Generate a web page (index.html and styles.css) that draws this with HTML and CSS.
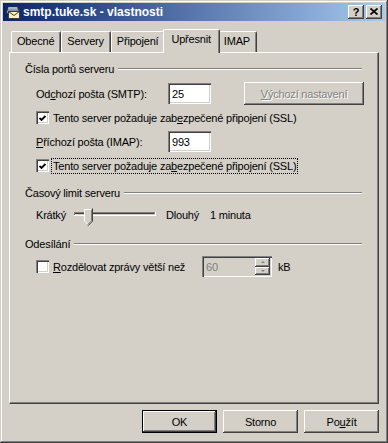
FILE: index.html
```html
<!DOCTYPE html>
<html lang="cs">
<head>
    <meta charset="UTF-8">
    <title>smtp.tuke.sk - vlastnosti</title>
    <link rel="stylesheet" href="styles.css">
</head>
<body>
    <div class="window">
        <div class="titlebar">
            <svg class="app-icon" width="16" height="16" viewBox="0 0 16 16">
                <path d="M1.5 7.5 L3.5 2.5 H12.5 L14.5 7.5 V9.5 H1.5 Z" fill="#8796ad" stroke="#1f2b4a"/>
                <path d="M3 4 H12" stroke="#c9d2e0"/>
                <rect x="3.5" y="7.5" width="11" height="7" fill="#fbf1bd" stroke="#3b3b3b"/>
                <path d="M3.5 7.5 L9 11.5 L14.5 7.5" fill="none" stroke="#3b3b3b"/>
            </svg>
            <span class="title">smtp.tuke.sk - vlastnosti</span>
            <div class="caption-buttons">
                <div class="cap-btn help">?</div>
                <div class="cap-btn close">
                    <svg width="8" height="7" viewBox="0 0 8 7">
                        <path d="M0.5 0.5 L7.5 6.5 M7.5 0.5 L0.5 6.5" stroke="#000" stroke-width="1.7"/>
                    </svg>
                </div>
            </div>
        </div>

        <div class="dialog">
            <div class="tabs">
                <div class="tab">Obecné</div>
                <div class="tab">Servery</div>
                <div class="tab">Připojení</div>
                <div class="tab active">Upřesnit</div>
                <div class="tab">IMAP</div>
            </div>

            <div class="tab-panel">
                <div class="group-title"><span>Čísla portů serveru</span><i class="etch"></i></div>

                <div class="row row-smtp">
                    <label class="field-label">Od<u>c</u>hozí pošta (SMTP):</label>
                    <input class="textbox" type="text" value="25">
                    <button class="btn btn-defaults" disabled><u>V</u>ýchozí nastavení</button>
                </div>

                <div class="row row-check row-ssl1">
                    <span class="checkbox">
                        <svg width="7" height="7" viewBox="0 0 7 7"><path d="M0.5 3 L2.5 5 L6.5 1" fill="none" stroke="#000" stroke-width="1.8"/></svg>
                    </span>
                    <span>Tento server požaduje zab<u>e</u>zpečené připojení (SSL)</span>
                </div>

                <div class="row row-imap">
                    <label class="field-label"><u>P</u>říchozí pošta (IMAP):</label>
                    <input class="textbox" type="text" value="993">
                </div>

                <div class="row row-check row-ssl2">
                    <span class="checkbox">
                        <svg width="7" height="7" viewBox="0 0 7 7"><path d="M0.5 3 L2.5 5 L6.5 1" fill="none" stroke="#000" stroke-width="1.8"/></svg>
                    </span>
                    <span class="focused">Tento server požaduje za<u>b</u>ezpečené připojení (SSL)</span>
                </div>

                <div class="group-title group-timeout"><span>Časový limit serveru</span><i class="etch"></i></div>

                <div class="row row-slider">
                    <span>Krátký</span>
                    <svg class="slider" width="82" height="18" viewBox="0 0 82 18">
                        <rect x="0" y="4" width="82" height="4" fill="#fff"/>
                        <rect x="0" y="4" width="81" height="3" fill="#808080"/>
                        <rect x="1" y="5" width="79" height="1" fill="#404040"/>
                        <rect x="1" y="6" width="80" height="1" fill="#d4d0c8"/>
                        <path d="M10 1 H18 V13 L14 17 L10 13 Z" fill="#d4d0c8"/>
                        <path d="M10.5 13 V1.5 H17.5" fill="none" stroke="#fff"/>
                        <path d="M18.5 0.5 V13.2 L14 17.7" fill="none" stroke="#404040"/>
                        <path d="M17.5 1.5 V12.8 L14 16.3" fill="none" stroke="#808080"/>
                        <path d="M10.5 13 L13.5 16" fill="none" stroke="#fff"/>
                    </svg>
                    <span class="slider-max">Dlouhý</span>
                    <span class="slider-value">1 minuta</span>
                </div>

                <div class="group-title group-send"><span>Odesílání</span><i class="etch"></i></div>

                <div class="row row-check row-split">
                    <span class="checkbox"></span>
                    <span class="split-label"><u>R</u>ozdělovat zprávy větší než</span>
                    <div class="spin">
                        <input class="spin-input" type="text" value="60" disabled>
                        <div class="spin-buttons">
                            <div class="spin-btn"><i class="arrow up"></i></div>
                            <div class="spin-btn"><i class="arrow down"></i></div>
                        </div>
                    </div>
                    <span class="unit">kB</span>
                </div>
            </div>

            <div class="dialog-buttons">
                <button class="btn btn-default">OK</button>
                <button class="btn">Storno</button>
                <button class="btn">Po<u>u</u>žít</button>
            </div>
        </div>
    </div>
</body>
</html>
```

FILE: styles.css
```css
:root {
    --face: #d4d0c8;
    --shadow: #808080;
    --dark: #404040;
    --light: #ffffff;
}

body {
    margin: 0;
    background: var(--face);
    font-family: 'Liberation Sans', Arial, sans-serif;
    font-size: 11px;
    color: #000;
}

.window {
    width: 388px;
    height: 443px;
    box-sizing: border-box;
    padding: 3px;
    background: var(--face);
    box-shadow: inset -1px -1px var(--dark), inset 1px 1px var(--face),
                inset -2px -2px var(--shadow), inset 2px 2px var(--light);
    display: flex;
    flex-direction: column;
}

/* title bar */
.titlebar {
    height: 18px;
    display: flex;
    align-items: center;
    padding: 0 2px 0 2px;
    background: linear-gradient(to right, #0a246a, #a6caf0);
    color: #fff;
}

.app-icon {
    flex: none;
    margin-right: 2px;
}

.title {
    font-weight: bold;
    font-size: 12px;
    flex: 1;
    white-space: nowrap;
}

.caption-buttons {
    display: flex;
    gap: 2px;
    margin-right: 1px;
}

.cap-btn {
    width: 16px;
    height: 14px;
    box-sizing: border-box;
    background: var(--face);
    box-shadow: inset -1px -1px var(--dark), inset 1px 1px var(--light),
                inset -2px -2px var(--shadow);
    display: flex;
    align-items: center;
    justify-content: center;
    color: #000;
    font-weight: bold;
    font-size: 11px;
    line-height: 14px;
}

.cap-btn.help {
    padding-bottom: 1px;
}

.cap-btn.close svg {
    margin-top: -1px;
}

/* dialog body */
.dialog {
    flex: 1;
    padding: 8px 6px 7px 6px;
    display: flex;
    flex-direction: column;
    letter-spacing: -0.2px;
}

.tabs {
    height: 23px;
    display: flex;
    align-items: flex-end;
    padding-left: 2px;
}

.tab {
    height: 21px;
    box-sizing: border-box;
    padding: 0 6px 0 5px;
    line-height: 19px;
    border-left: 1px solid var(--light);
    border-top: 1px solid var(--light);
    border-right: 1px solid var(--dark);
    border-radius: 2px 2px 0 0;
    box-shadow: inset -1px 0 var(--shadow);
    background: var(--face);
    white-space: nowrap;
}

.tab.active {
    height: 24px;
    margin: 0 -2px -1px -2px;
    padding: 0 8px 0 7px;
    line-height: 19px;
    position: relative;
    z-index: 2;
}

.tab-panel {
    height: 352px;
    box-sizing: border-box;
    border-top: 1px solid var(--light);
    border-left: 1px solid var(--light);
    border-right: 1px solid var(--dark);
    border-bottom: 1px solid var(--dark);
    box-shadow: inset -1px -1px var(--shadow);
    padding: 9px 16px 0 15px;
    display: flex;
    flex-direction: column;
}

/* group headers */
.group-title {
    height: 13px;
    display: flex;
    align-items: center;
    gap: 4px;
    white-space: nowrap;
}

.etch {
    flex: 1;
    height: 0;
    border-top: 1px solid var(--shadow);
    border-bottom: 1px solid var(--light);
    margin-top: 1px;
}

.group-timeout {
    margin-top: 14px;
}

.group-send {
    margin-top: 12px;
}

/* rows */
.row {
    display: flex;
    align-items: center;
    padding-left: 11px;
    white-space: nowrap;
}

.row-smtp {
    height: 23px;
    margin-top: 7px;
}

.row-imap {
    height: 21px;
    margin-top: 7px;
}

.row-check {
    height: 13px;
    gap: 4px;
}

.row-ssl1 {
    margin-top: 6px;
}

.row-ssl2 {
    margin-top: 7px;
}

.row-slider {
    height: 21px;
    margin-top: 5px;
}

.row-split {
    height: 21px;
    margin-top: 6px;
}

.field-label {
    width: 132px;
}

.textbox,
.spin-input {
    width: 43px;
    height: 21px;
    box-sizing: border-box;
    border: none;
    outline: none;
    margin: 0;
    padding: 0 4px;
    font: inherit;
    letter-spacing: inherit;
    color: #000;
    background: #fff;
    box-shadow: inset 1px 1px var(--shadow), inset 2px 2px var(--dark),
                inset -1px -1px var(--light), inset -2px -2px var(--face);
}

.checkbox {
    width: 13px;
    height: 13px;
    flex: none;
    box-sizing: border-box;
    background: #fff;
    box-shadow: inset 1px 1px var(--shadow), inset 2px 2px var(--dark),
                inset -1px -1px var(--light), inset -2px -2px var(--face);
    display: flex;
    align-items: center;
    justify-content: center;
}

.checkbox svg {
    margin: 1px 0 0 0;
}

.focused {
    outline: 1px dotted #000;
    outline-offset: 0;
    padding: 0 1px;
    margin-left: -1px;
    line-height: 14px;
}

/* slider */
.slider {
    margin: 4px 0 0 8px;
}

.slider-max {
    margin-left: 10px;
}

.slider-value {
    margin-left: 11px;
}

/* split messages */
.split-label {
    width: 145px;
}

.spin {
    width: 70px;
    height: 21px;
    box-sizing: border-box;
    display: flex;
    align-items: stretch;
    padding: 2px;
    background: var(--face);
    box-shadow: inset 1px 1px var(--shadow), inset 2px 2px var(--dark),
                inset -1px -1px var(--light), inset -2px -2px var(--face);
}

.spin-input {
    flex: 1;
    width: auto;
    min-width: 0;
    height: 17px;
    padding: 0 2px;
    background: var(--face);
    box-shadow: none;
    color: var(--shadow);
}

.spin-buttons {
    width: 15px;
    display: flex;
    flex-direction: column;
}

.spin-btn {
    flex: 1;
    background: var(--face);
    box-shadow: inset -1px -1px var(--dark), inset 1px 1px var(--light),
                inset -2px -2px var(--shadow);
    display: flex;
    align-items: center;
    justify-content: center;
}

.arrow {
    width: 0;
    height: 0;
    border-left: 2px solid transparent;
    border-right: 2px solid transparent;
}

.arrow.up {
    border-bottom: 2px solid var(--shadow);
}

.arrow.down {
    border-top: 2px solid var(--shadow);
}

.unit {
    margin-left: 2px;
}

/* buttons */
.btn {
    height: 23px;
    width: 75px;
    box-sizing: border-box;
    border: none;
    margin: 0;
    padding: 0;
    font: inherit;
    letter-spacing: inherit;
    color: #000;
    background: var(--face);
    box-shadow: inset -1px -1px var(--dark), inset 1px 1px var(--light),
                inset -2px -2px var(--shadow), inset 2px 2px var(--face);
}

.btn-default {
    box-shadow: inset 0 0 0 1px #000, inset -2px -2px var(--dark),
                inset 2px 2px var(--light), inset -3px -3px var(--shadow);
}

.btn-defaults {
    width: 120px;
    margin-left: auto;
    margin-right: -2px;
    color: var(--shadow);
    text-shadow: 1px 1px var(--light);
}

.dialog-buttons {
    display: flex;
    justify-content: flex-end;
    gap: 6px;
    margin-top: 6px;
}
```
